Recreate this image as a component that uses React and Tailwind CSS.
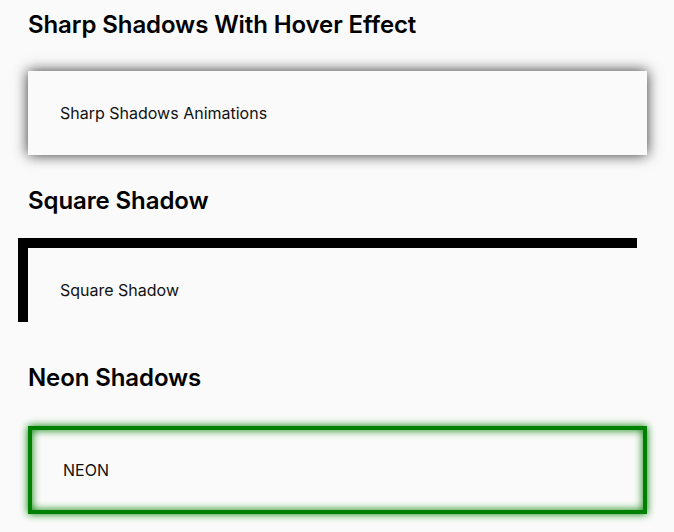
export default function App() {
  return (
    <div className="min-h-screen w-full bg-[#fafafa] pl-[28px] pr-[27px] pt-[9px] pb-4 font-['Inter','Liberation_Sans',sans-serif] text-black">
      {/* Sharp shadows */}
      <section>
        <h2 className="text-2xl leading-8 font-semibold tracking-[-0.1px]">Sharp Shadows With Hover Effect</h2>
        <div className="mt-[30px] h-[84px] bg-[#fafafa] px-8 flex items-center shadow-[0_0_13px_rgba(0,0,0,0.8)]">
          <p className="text-base leading-5 text-[#111]">Sharp Shadows Animations</p>
        </div>
      </section>

      {/* Square shadow */}
      <section className="mt-[30px]">
        <h2 className="text-2xl leading-8 font-semibold tracking-[-0.1px]">Square Shadow</h2>
        <div className="mt-[31px] h-[84px] bg-[#fafafa] px-8 flex items-center shadow-[-10px_-10px_0_0_#000]">
          <p className="text-base leading-5 text-[#111]">Square Shadow</p>
        </div>
      </section>

      {/* Neon */}
      <section className="mt-[30px]">
        <h2 className="text-2xl leading-8 font-semibold tracking-[-0.1px]">Neon Shadows</h2>
        <div className="mt-8 h-[88px] bg-[#fafafa] border-4 border-[#008000] pl-[31px] pr-8 flex items-center shadow-[0_0_8px_#008000,inset_0_0_8px_#008000]">
          <p className="text-base leading-5 text-[#111]">NEON</p>
        </div>
      </section>
    </div>
  );
}
